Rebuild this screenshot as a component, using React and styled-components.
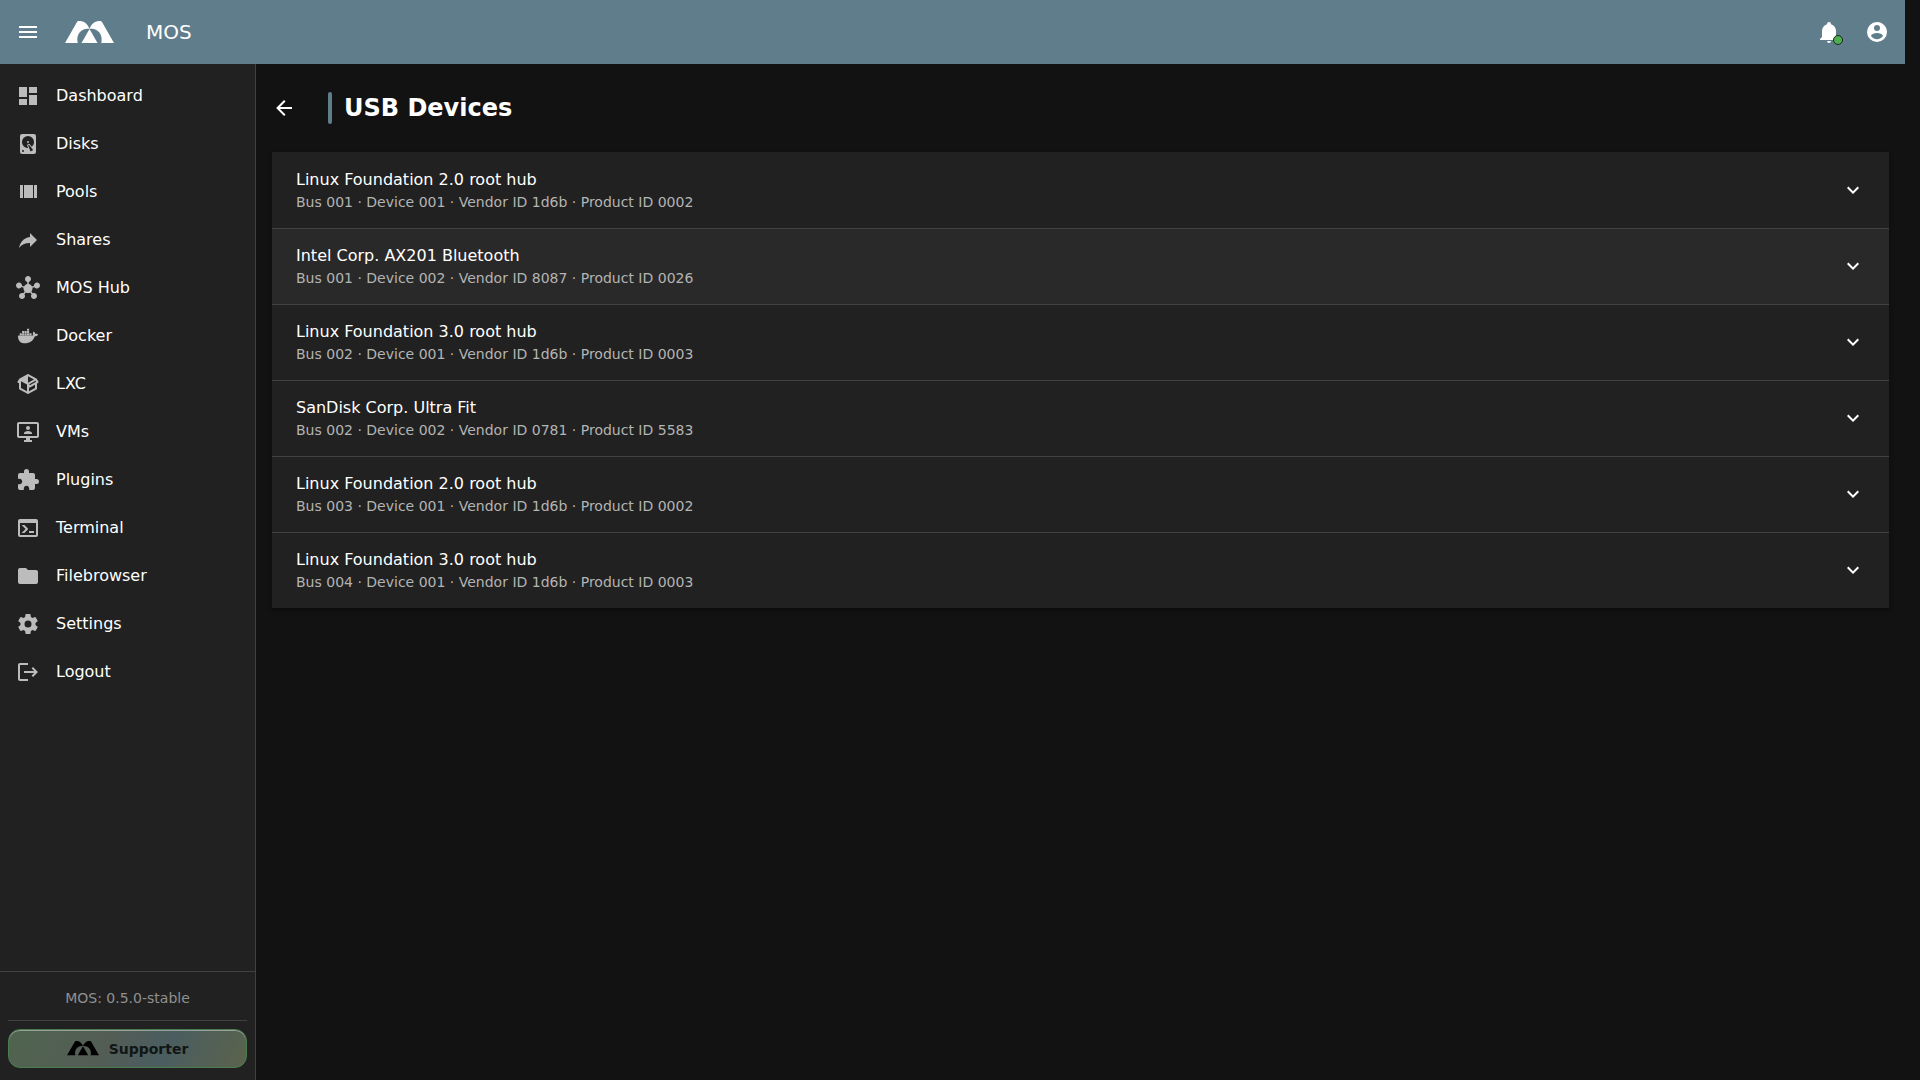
import React, { useState } from "react";

import { MdHub } from "react-icons/md";
import styled, { createGlobalStyle } from "styled-components";

const icons = {
  menu: "M3,6H21V8H3V6M3,11H21V13H3V11M3,16H21V18H3V16Z",
  bell: "M21,19V20H3V19L5,17V11C5,7.9 7.03,5.17 10,4.29C10,4.19 10,4.1 10,4A2,2 0 0,1 12,2A2,2 0 0,1 14,4C14,4.1 14,4.19 14,4.29C16.97,5.17 19,7.9 19,11V17L21,19M14,21A2,2 0 0,1 12,23A2,2 0 0,1 10,21",
  account:
    "M12,19.2C9.5,19.2 7.29,17.92 6,16C6.03,14 10,12.9 12,12.9C14,12.9 17.97,14 18,16C16.71,17.92 14.5,19.2 12,19.2M12,5A3,3 0 0,1 15,8A3,3 0 0,1 12,11A3,3 0 0,1 9,8A3,3 0 0,1 12,5M12,2A10,10 0 0,0 2,12A10,10 0 0,0 12,22A10,10 0 0,0 22,12C22,6.47 17.5,2 12,2Z",
  back: "M20,11V13H8L13.5,18.5L12.08,19.92L4.16,12L12.08,4.08L13.5,5.5L8,11H20Z",
  chevron: "M7.41,8.58L12,13.17L16.59,8.58L18,10L12,16L6,10L7.41,8.58Z",
  dashboard: "M13,3V9H21V3M13,21H21V11H13M3,21H11V15H3M3,13H11V3H3V13Z",
  disk: "M6,2H18A2,2 0 0,1 20,4V20A2,2 0 0,1 18,22H6A2,2 0 0,1 4,20V4A2,2 0 0,1 6,2M12,4A6,6 0 0,0 6,10C6,13.31 8.69,16 12.1,16L11.22,13.77C10.95,13.29 11.11,12.68 11.59,12.4L12.45,11.9C12.93,11.63 13.54,11.79 13.82,12.27L15.74,14.69C17.12,13.59 18,11.9 18,10A6,6 0 0,0 12,4M12,9A1,1 0 0,1 13,10A1,1 0 0,1 12,11A1,1 0 0,1 11,10A1,1 0 0,1 12,9M7,18A1,1 0 0,0 6,19A1,1 0 0,0 7,20A1,1 0 0,0 8,19A1,1 0 0,0 7,18M12.09,13.27L14.58,19.58L17.17,18.08L12.95,12.77L12.09,13.27Z",
  pools: "M8,18H17V5H8M18,5V18H21V5M4,18H7V5H4V18Z",
  share: "M21,12L14,5V9C7,10 4,15 3,20C5.5,16.5 9,14.9 14,14.9V19L21,12Z",
  docker:
    "M21.81 10.25C21.75 10.21 21.25 9.82 20.17 9.82C19.89 9.82 19.61 9.85 19.33 9.9C19.12 8.5 17.95 7.79 17.9 7.76L17.61 7.59L17.43 7.86C17.19 8.22 17 8.63 16.92 9.05C16.72 9.85 16.84 10.61 17.25 11.26C16.76 11.54 15.96 11.61 15.79 11.61H2.62C2.28 11.61 2 11.89 2 12.24C2 13.39 2.18 14.54 2.58 15.62C3.03 16.81 3.71 17.69 4.58 18.23C5.56 18.83 7.17 19.17 9 19.17C9.79 19.17 10.61 19.1 11.42 18.95C12.54 18.75 13.62 18.36 14.61 17.79C15.43 17.32 16.16 16.72 16.78 16C17.82 14.83 18.43 13.5 18.89 12.35H19.07C20.23 12.35 20.94 11.89 21.33 11.5C21.59 11.26 21.78 10.97 21.92 10.63L22 10.39L21.81 10.25M3.69 9.34H5.77V11.24H3.69V9.34M6.12 9.34H8.2V11.24H6.12V9.34M8.6 9.34H10.67V11.24H8.6V9.34M11.04 9.34H13.12V11.24H11.04V9.34M13.5 9.34H15.57V11.24H13.5V9.34M6.12 7.09H8.2V9H6.12V7.09M8.6 7.09H10.67V9H8.6V7.09M11.04 7.09H13.12V9H11.04V7.09M11.04 4.83H13.12V6.72H11.04V4.83Z",
  box: "M2,10.96C1.5,10.68 1.35,10.07 1.63,9.59L3.13,7C3.24,6.8 3.41,6.66 3.6,6.58L11.43,2.18C11.59,2.06 11.79,2 12,2C12.21,2 12.41,2.06 12.57,2.18L20.47,6.62C20.66,6.72 20.82,6.88 20.91,7.08L22.36,9.6C22.64,10.08 22.47,10.69 22,10.96L21,11.54V16.5C21,16.88 20.79,17.21 20.47,17.38L12.57,21.82C12.41,21.94 12.21,22 12,22C11.79,22 11.59,21.94 11.43,21.82L3.53,17.38C3.21,17.21 3,16.88 3,16.5V10.96C2.7,11.13 2.32,11.14 2,10.96M12,4.15V4.15L12,10.85V10.85L17.96,7.5L12,4.15M5,15.91L11,19.29V12.58L5,9.21V15.91M19,15.91V12.69L14,15.59C13.67,15.77 13.3,15.76 13,15.6V19.29L19,15.91M13.85,13.36L20.13,9.73L19.55,8.72L13.27,12.35L13.85,13.36Z",
  monitor:
    "M21,16V4H3V16H21M21,2A2,2 0 0,1 23,4V16A2,2 0 0,1 21,18H14V20H16V22H8V20H10V18H3C1.89,18 1,17.1 1,16V4C1,2.89 1.89,2 3,2H21M12,6A2,2 0 0,1 14,8A2,2 0 0,1 12,10A2,2 0 0,1 10,8A2,2 0 0,1 12,6M16,14H8V13C8,11.67 10.67,11 12,11C13.33,11 16,11.67 16,13V14Z",
  puzzle:
    "M20.5,11H19V7C19,5.89 18.1,5 17,5H13V3.5A2.5,2.5 0 0,0 10.5,1A2.5,2.5 0 0,0 8,3.5V5H4A2,2 0 0,0 2,7V10.8H3.5C5,10.8 6.2,12 6.2,13.5C6.2,15 5,16.2 3.5,16.2H2V20A2,2 0 0,0 4,22H7.8V20.5C7.8,19 9,17.8 10.5,17.8C12,17.8 13.2,19 13.2,20.5V22H17A2,2 0 0,0 19,20V16H20.5A2.5,2.5 0 0,0 23,13.5A2.5,2.5 0 0,0 20.5,11Z",
  console:
    "M20,19V7H4V19H20M20,3A2,2 0 0,1 22,5V19A2,2 0 0,1 20,21H4A2,2 0 0,1 2,19V5C2,3.89 2.9,3 4,3H20M13,17V15H18V17H13M9.58,13L5.57,9H8.4L11.7,12.3C12.09,12.69 12.09,13.33 11.7,13.72L8.42,17H5.59L9.58,13Z",
  folder:
    "M10,4H4C2.89,4 2,4.89 2,6V18A2,2 0 0,0 4,20H20A2,2 0 0,0 22,18V8C22,6.89 21.1,6 20,6H12L10,4Z",
  cog: "M12,15.5A3.5,3.5 0 0,1 8.5,12A3.5,3.5 0 0,1 12,8.5A3.5,3.5 0 0,1 15.5,12A3.5,3.5 0 0,1 12,15.5M19.43,12.97C19.47,12.65 19.5,12.33 19.5,12C19.5,11.67 19.47,11.34 19.43,11L21.54,9.37C21.73,9.22 21.78,8.95 21.66,8.73L19.66,5.27C19.54,5.05 19.27,4.96 19.05,5.05L16.56,6.05C16.04,5.66 15.5,5.32 14.87,5.07L14.5,2.42C14.46,2.18 14.25,2 14,2H10C9.75,2 9.54,2.18 9.5,2.42L9.13,5.07C8.5,5.32 7.96,5.66 7.44,6.05L4.95,5.05C4.73,4.96 4.46,5.05 4.34,5.27L2.34,8.73C2.21,8.95 2.27,9.22 2.46,9.37L4.57,11C4.53,11.34 4.5,11.67 4.5,12C4.5,12.33 4.53,12.65 4.57,12.97L2.46,14.63C2.27,14.78 2.21,15.05 2.34,15.27L4.34,18.73C4.46,18.95 4.73,19.03 4.95,18.95L7.44,17.94C7.96,18.34 8.5,18.68 9.13,18.93L9.5,21.58C9.54,21.82 9.75,22 10,22H14C14.25,22 14.46,21.82 14.5,21.58L14.87,18.93C15.5,18.67 16.04,18.34 16.56,17.94L19.05,18.95C19.27,19.03 19.54,18.95 19.66,18.73L21.66,15.27C21.78,15.05 21.73,14.78 21.54,14.63L19.43,12.97Z",
  logout:
    "M17 7L15.59 8.41L18.17 11H8V13H18.17L15.59 15.58L17 17L22 12M4 5H12V3H4C2.9 3 2 3.9 2 5V19C2 20.1 2.9 21 4 21H12V19H4V5Z",
};

const menuItems = [
  { title: "Dashboard", icon: "dashboard" },
  { title: "Disks", icon: "disk" },
  { title: "Pools", icon: "pools" },
  { title: "Shares", icon: "share" },
  { title: "MOS Hub", icon: "hub" },
  { title: "Docker", icon: "docker" },
  { title: "LXC", icon: "box" },
  { title: "VMs", icon: "monitor" },
  { title: "Plugins", icon: "puzzle" },
  { title: "Terminal", icon: "console" },
  { title: "Filebrowser", icon: "folder" },
  { title: "Settings", icon: "cog" },
  { title: "Logout", icon: "logout" },
];

const devices = [
  { name: "Linux Foundation 2.0 root hub", bus: "001", device: "001", vendor: "1d6b", product: "0002" },
  { name: "Intel Corp. AX201 Bluetooth", bus: "001", device: "002", vendor: "8087", product: "0026", active: true },
  { name: "Linux Foundation 3.0 root hub", bus: "002", device: "001", vendor: "1d6b", product: "0003" },
  { name: "SanDisk Corp. Ultra Fit", bus: "002", device: "002", vendor: "0781", product: "5583" },
  { name: "Linux Foundation 2.0 root hub", bus: "003", device: "001", vendor: "1d6b", product: "0002" },
  { name: "Linux Foundation 3.0 root hub", bus: "004", device: "001", vendor: "1d6b", product: "0003" },
];

function Icon({ name }) {
  if (name === "hub") {
    return <MdHub size={24} aria-hidden="true" />;
  }
  return (
    <svg width="24" height="24" viewBox="0 0 24 24" fill="currentColor" aria-hidden="true">
      <path fillRule="evenodd" d={icons[name]} />
    </svg>
  );
}

function Logo({ width }) {
  return (
    <svg width={width} viewBox="0 0 49 22" fill="currentColor" aria-hidden="true">
      <path d="M0 22L12 1C12.500 0 13 0 15 0C20 0 23 4 24.500 8C18 6.500 10.500 12 12.700 22Z" />
      <path d="M49 22L37 1C36.500 0 36 0 34 0C29 0 26 4 24.500 8C31 6.500 38.500 12 36.300 22Z" />
      <path d="M24.500 8L32.500 22H16.500Z" />
    </svg>
  );
}

function App() {
  const [sidebar, setSidebar] = useState(true);
  return (
    <>
      <GlobalStyle />
      <Page>
        <TopBar>
          <IconButton aria-label="Menu" onClick={() => setSidebar(!sidebar)}>
            <Icon name="menu" />
          </IconButton>
          <Brand href="#">
            <Logo width={49} />
            <span>MOS</span>
          </Brand>
          <IconButton aria-label="Notifications">
            <BellWrap>
              <Icon name="bell" />
              <Badge />
            </BellWrap>
          </IconButton>
          <IconButton aria-label="Account">
            <Icon name="account" />
          </IconButton>
        </TopBar>
        <Body>
          {sidebar && (
            <Sidebar>
              <Menu>
                {menuItems.map((item) => (
                  <li key={item.title}>
                    <MenuLink href="#">
                      <Icon name={item.icon} />
                      <span>{item.title}</span>
                    </MenuLink>
                  </li>
                ))}
              </Menu>
              <SidebarFooter>
                <Version>MOS: 0.5.0-stable</Version>
                <Divider />
                <Supporter>
                  <Logo width={32} />
                  <span>Supporter</span>
                </Supporter>
              </SidebarFooter>
            </Sidebar>
          )}
          <Main>
            <TitleRow>
              <BackButton aria-label="Back">
                <Icon name="back" />
              </BackButton>
              <Accent />
              <Title>USB Devices</Title>
            </TitleRow>
            <Panels>
              {devices.map((item) => (
                <Panel key={item.bus + item.device} $active={item.active}>
                  <span>
                    <DeviceName>{item.name}</DeviceName>
                    <DeviceInfo>
                      Bus {item.bus} · Device {item.device} · Vendor ID {item.vendor} · Product ID{" "}
                      {item.product}
                    </DeviceInfo>
                  </span>
                  <Icon name="chevron" />
                </Panel>
              ))}
            </Panels>
          </Main>
        </Body>
      </Page>
    </>
  );
}

const GlobalStyle = createGlobalStyle`
  * {
    box-sizing: border-box;
  }
  body {
    margin: 0;
    background: #121212;
    color: #fff;
    font-family: "DejaVu Sans", sans-serif;
    font-size: 16px;
    line-height: 24px;
  }
  button {
    font: inherit;
    color: inherit;
    border: none;
    padding: 0;
    background: none;
    cursor: pointer;
  }
  a {
    color: inherit;
    text-decoration: none;
  }
  svg {
    display: block;
    flex: none;
  }
`;

const Page = styled.div`
  display: flex;
  flex-direction: column;
  min-height: 100vh;
`;

const TopBar = styled.header`
  display: flex;
  align-items: center;
  height: 64px;
  margin-right: 15px;
  padding: 0 4px;
  background: #607d8b;
`;

const IconButton = styled.button`
  display: grid;
  place-items: center;
  width: 48px;
  height: 48px;
  border-radius: 50%;
`;

const Brand = styled.a`
  display: flex;
  align-items: center;
  gap: 32px;
  flex: 1;
  padding-left: 13px;
  font-size: 20px;
`;

const BellWrap = styled.span`
  position: relative;
`;

const Badge = styled.span`
  position: absolute;
  right: -2px;
  bottom: -1px;
  width: 10px;
  height: 10px;
  border: 1px solid #212121;
  border-radius: 50%;
  background: #4caf50;
`;

const Body = styled.div`
  display: flex;
  flex: 1;
`;

const Sidebar = styled.nav`
  display: flex;
  flex-direction: column;
  justify-content: space-between;
  width: 256px;
  background: #212121;
  border-right: 1px solid #414141;
`;

const Menu = styled.ul`
  margin: 0;
  padding: 8px 0;
  list-style: none;
`;

const MenuLink = styled.a`
  display: flex;
  align-items: center;
  gap: 16px;
  height: 48px;
  padding: 0 16px;
  svg {
    color: #bcbcbc;
  }
`;

const SidebarFooter = styled.div`
  padding: 0 8px 12px;
  border-top: 1px solid #414141;
`;

const Version = styled.div`
  padding: 16px 0 12px;
  color: #909090;
  font-size: 14px;
  line-height: 20px;
  text-align: center;
`;

const Divider = styled.hr`
  margin: 0 0 8px;
  border: none;
  border-top: 1px solid #414141;
`;

const Supporter = styled.button`
  && {
    display: flex;
    align-items: center;
    justify-content: center;
    gap: 10px;
    width: 100%;
    height: 39px;
    border: 1px solid #4b7d4e;
    border-radius: 12px;
    background: linear-gradient(120deg, #50644f, #535d55 40%, #4b5d60 65%, #5a634b);
    box-shadow: inset 0 1px 0 rgba(255, 255, 255, 0.4);
    color: #111615;
    font-size: 14px;
    font-weight: 700;
    line-height: 20px;
  }
  svg {
    color: #000;
  }
`;

const Main = styled.main`
  flex: 1;
  padding: 24px 31px 24px 16px;
`;

const TitleRow = styled.div`
  display: flex;
  align-items: center;
  margin-bottom: 24px;
`;

const BackButton = styled(IconButton)`
  width: 24px;
  height: 40px;
`;

const Accent = styled.span`
  width: 4px;
  height: 32px;
  margin: 0 12px 0 32px;
  border-radius: 2px;
  background: #607d8b;
`;

const Title = styled.h1`
  margin: 0;
  font-size: 24px;
  line-height: 32px;
`;

const Panels = styled.div`
  background: #212121;
  box-shadow: 0 2px 4px rgba(0, 0, 0, 0.4);
`;

const Panel = styled.button`
  && {
    display: flex;
    align-items: center;
    justify-content: space-between;
    width: 100%;
    padding: 16px 24px;
    background: ${(props) => (props.$active ? "#292929" : "#212121")};
    text-align: left;
  }
  & + & {
    box-shadow: inset 0 1px 0 #424242;
  }
`;

const DeviceName = styled.span`
  display: block;
`;

const DeviceInfo = styled.span`
  display: block;
  color: #b4b4b4;
  font-size: 14px;
  line-height: 20px;
`;

export default App;
